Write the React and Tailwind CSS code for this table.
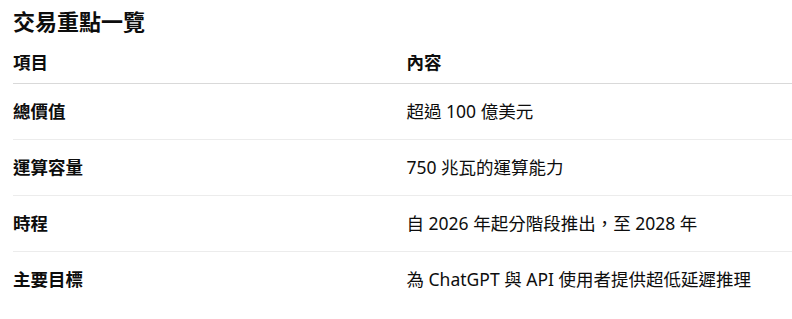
const rows = [
  ["總價值", "超過 100 億美元"],
  ["運算容量", "750 兆瓦的運算能力"],
  ["時程", "自 2026 年起分階段推出，至 2028 年"],
  ["主要目標", "為 ChatGPT 與 API 使用者提供超低延遲推理"],
];

const App = () => {
  return (
    <div
      className="bg-white text-[#0d0d0d] pl-[13px] pt-[6px] min-h-screen [text-spacing-trim:space-all]"
      style={{ fontFamily: '"Noto Sans", "Noto Sans CJK TC", sans-serif' }}
    >
      <h2 className="text-[22px] leading-[30px] font-bold mb-[14px]">交易重點一覽</h2>
      <table className="w-full border-collapse text-[17.5px] leading-[25px]">
        <thead>
          <tr className="border-b border-[#d9d9d9]">
            <th className="w-1/2 text-left font-bold pb-2 pt-0">項目</th>
            <th className="text-left font-bold pb-2 pt-0 pl-[4px]">內容</th>
          </tr>
        </thead>
        <tbody>
          {rows.map(([label, value], i) => (
            <tr
              key={label}
              className={i < rows.length - 1 ? "border-b border-[#ececec]" : ""}
            >
              <td className="py-[15px] font-bold">{label}</td>
              <td className="py-[15px] pl-[4px]">{value}</td>
            </tr>
          ))}
        </tbody>
      </table>
    </div>
  );
};

export default App;
